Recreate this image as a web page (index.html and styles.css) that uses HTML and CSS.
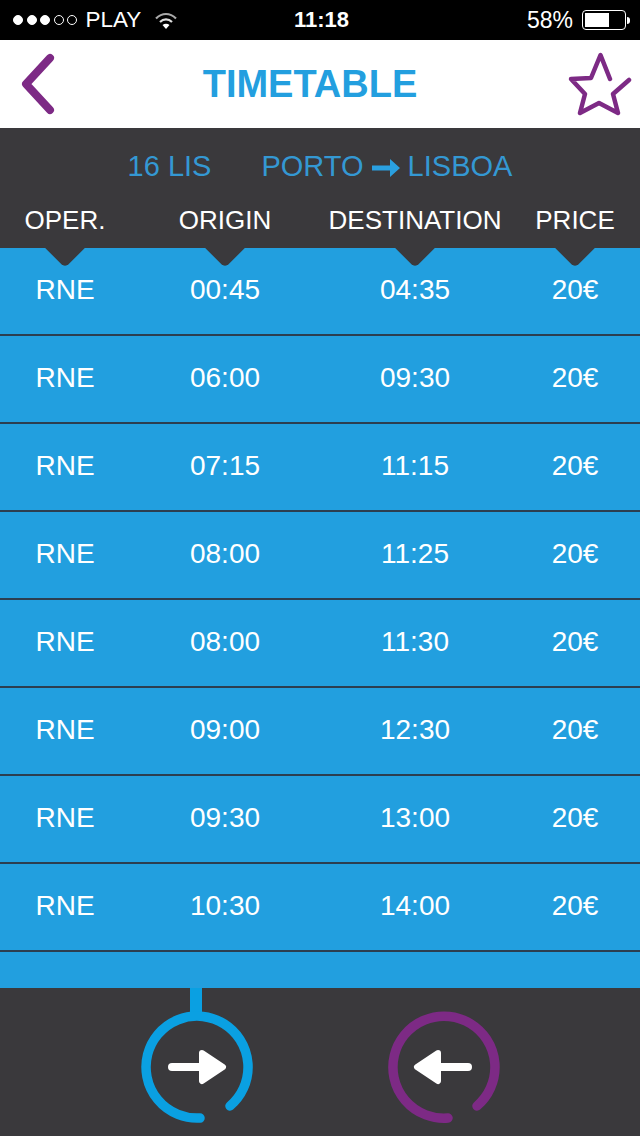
FILE: index.html
```html
<!DOCTYPE html>
<html lang="en">
<head>
  <meta charset="UTF-8">
  <meta name="viewport" content="width=device-width, initial-scale=1.0">
  <title>Timetable</title>
  <link rel="stylesheet" href="styles.css">
</head>
<body>
  <div class="status">
    <div class="status-left">
      <span class="dot on"></span><span class="dot on"></span><span class="dot on"></span><span class="dot"></span><span class="dot"></span>
      <span class="carrier">PLAY</span>
      <svg class="wifi" width="24" height="18" viewBox="0 0 24 18">
        <path d="M2 7.5C8 1.5 16 1.5 22 7.5" fill="none" stroke="#aaa" stroke-width="2.2"/>
        <path d="M6 11C9.5 7.5 14.5 7.5 18 11" fill="none" stroke="#ddd" stroke-width="2.2"/>
        <path d="M12 18L8.5 14C10.5 12.4 13.5 12.4 15.5 14Z" fill="#fff"/>
      </svg>
    </div>
    <div class="status-time">11:18</div>
    <div class="status-right">
      <span class="percent">58%</span>
      <div class="battery"><div class="battery-fill"></div></div>
      <div class="battery-tip"></div>
    </div>
  </div>

  <header class="topbar">
    <svg class="back" width="36" height="64" viewBox="0 0 36 64">
      <path d="M30 6L6 32L30 58" fill="none" stroke="#7d2a85" stroke-width="8" stroke-linecap="round" stroke-linejoin="round"/>
    </svg>
    <h1>TIMETABLE</h1>
    <svg class="star" width="64" height="64" viewBox="0 0 64 64">
      <path d="M42 27L32.500 3L23 26L3 27L17 42L12 61L31 51L50 61L45 42L61 28" fill="none" stroke="#7d2a85" stroke-width="4.500" stroke-linecap="round" stroke-linejoin="round"/>
    </svg>
  </header>

  <section class="summary">
    <div class="route">
      <span class="route-date">16 LIS</span>
      <span class="route-path">PORTO
        <svg class="route-arrow" width="28" height="18" viewBox="0 0 28 18">
          <path d="M0 6.500H18V0L28 9L18 18V11.500H0Z" fill="#2aa0e0"/>
        </svg>
        LISBOA</span>
    </div>
    <div class="cols heads">
      <div class="head">OPER.</div>
      <div class="head">ORIGIN</div>
      <div class="head">DESTINATION</div>
      <div class="head">PRICE</div>
    </div>
  </section>

  <main class="list">
    <div class="cols row"><div>RNE</div><div>00:45</div><div>04:35</div><div>20€</div></div>
    <div class="cols row"><div>RNE</div><div>06:00</div><div>09:30</div><div>20€</div></div>
    <div class="cols row"><div>RNE</div><div>07:15</div><div>11:15</div><div>20€</div></div>
    <div class="cols row"><div>RNE</div><div>08:00</div><div>11:25</div><div>20€</div></div>
    <div class="cols row"><div>RNE</div><div>08:00</div><div>11:30</div><div>20€</div></div>
    <div class="cols row"><div>RNE</div><div>09:00</div><div>12:30</div><div>20€</div></div>
    <div class="cols row"><div>RNE</div><div>09:30</div><div>13:00</div><div>20€</div></div>
    <div class="cols row"><div>RNE</div><div>10:30</div><div>14:00</div><div>20€</div></div>
  </main>

  <footer class="bottom">
    <svg width="120" height="148" viewBox="0 0 120 148">
      <path d="M60 0V30" fill="none" stroke="#0aa0e2" stroke-width="12"/>
      <path d="M64 130A51 51 0 1 1 94 118" fill="none" stroke="#0aa0e2" stroke-width="9.500" stroke-linecap="round"/>
      <path d="M36 79H82" fill="none" stroke="#fff" stroke-width="8" stroke-linecap="round"/>
      <path d="M66 65L87 79L66 93Z" fill="#fff" stroke="#fff" stroke-width="6" stroke-linejoin="round"/>
    </svg>
    <svg width="120" height="148" viewBox="0 0 120 148">
      <path d="M64 130A51 51 0 1 1 93 118" fill="none" stroke="#7d2a85" stroke-width="9.500" stroke-linecap="round"/>
      <path d="M84 79H38" fill="none" stroke="#fff" stroke-width="8" stroke-linecap="round"/>
      <path d="M54 65L33 79L54 93Z" fill="#fff" stroke="#fff" stroke-width="6" stroke-linejoin="round"/>
    </svg>
  </footer>
</body>
</html>
```

FILE: styles.css
```css
* {
  margin: 0;
  padding: 0;
  box-sizing: border-box;
  font-family: "Liberation Sans", Arial, sans-serif;
}

body {
  width: 640px;
  height: 1136px;
  overflow: hidden;
  background: #3a393c;
}

/* Status bar */
.status {
  height: 40px;
  background: #000;
  color: #fff;
  display: grid;
  grid-template-columns: 1fr auto 1fr;
  align-items: center;
  padding: 0 10px 0 13px;
  font-size: 23px;
}

.status-left {
  display: flex;
  align-items: center;
  gap: 3.500px;
}

.dot {
  width: 10px;
  height: 10px;
  border: 1px solid #fff;
  border-radius: 50%;
}

.dot.on {
  background: #fff;
}

.carrier {
  margin-left: 5px;
  font-size: 22.500px;
}

.wifi {
  margin-left: 9px;
}

.status-time {
  font-weight: bold;
  font-size: 22px;
}

.status-right {
  display: flex;
  align-items: center;
  justify-content: flex-end;
}

.percent {
  margin-right: 9px;
}

.battery {
  width: 44px;
  height: 20px;
  border: 1px solid #fff;
  border-radius: 4px;
  padding: 2px;
}

.battery-fill {
  width: 24px;
  height: 100%;
  background: #fff;
}

.battery-tip {
  width: 3px;
  height: 7px;
  margin-left: 1px;
  background: #fff;
  border-radius: 0 3px 3px 0;
}

/* Title bar */
.topbar {
  height: 88px;
  background: #fff;
  display: flex;
  align-items: center;
  justify-content: space-between;
  padding: 0 8px 0 20px;
}

.topbar h1 {
  flex: 1;
  text-align: center;
  color: #239fdf;
  font-size: 38px;
  font-weight: bold;
  padding-right: 4px;
}

/* Route and column heads */
.summary {
  height: 120px;
  background: #3a393c;
}

.route {
  height: 76px;
  padding-top: 20px;
  display: flex;
  justify-content: center;
  gap: 50px;
  color: #3498d3;
  font-size: 29px;
  line-height: 36px;
}

.route-arrow {
  vertical-align: -1px;
}

.cols {
  display: grid;
  grid-template-columns: 130px 190px 190px 130px;
  text-align: center;
}

.heads {
  color: #fff;
  font-size: 26px;
  line-height: 32px;
}

.head {
  position: relative;
  height: 44px;
}

.head::after {
  content: "";
  position: absolute;
  left: 50%;
  bottom: -14px;
  width: 28px;
  height: 28px;
  margin-left: -14px;
  background: #3a393c;
  border-radius: 0 0 5px 0;
  transform: rotate(45deg);
}

/* Timetable rows */
.list {
  height: 740px;
  background: #229fdf;
}

.row {
  height: 88px;
  border-bottom: 2px solid #2c3e50;
  color: #fff;
  font-size: 28px;
  line-height: 84px;
}

/* Bottom buttons */
.bottom {
  height: 148px;
  display: flex;
  gap: 128px;
  padding-left: 136px;
}
```
